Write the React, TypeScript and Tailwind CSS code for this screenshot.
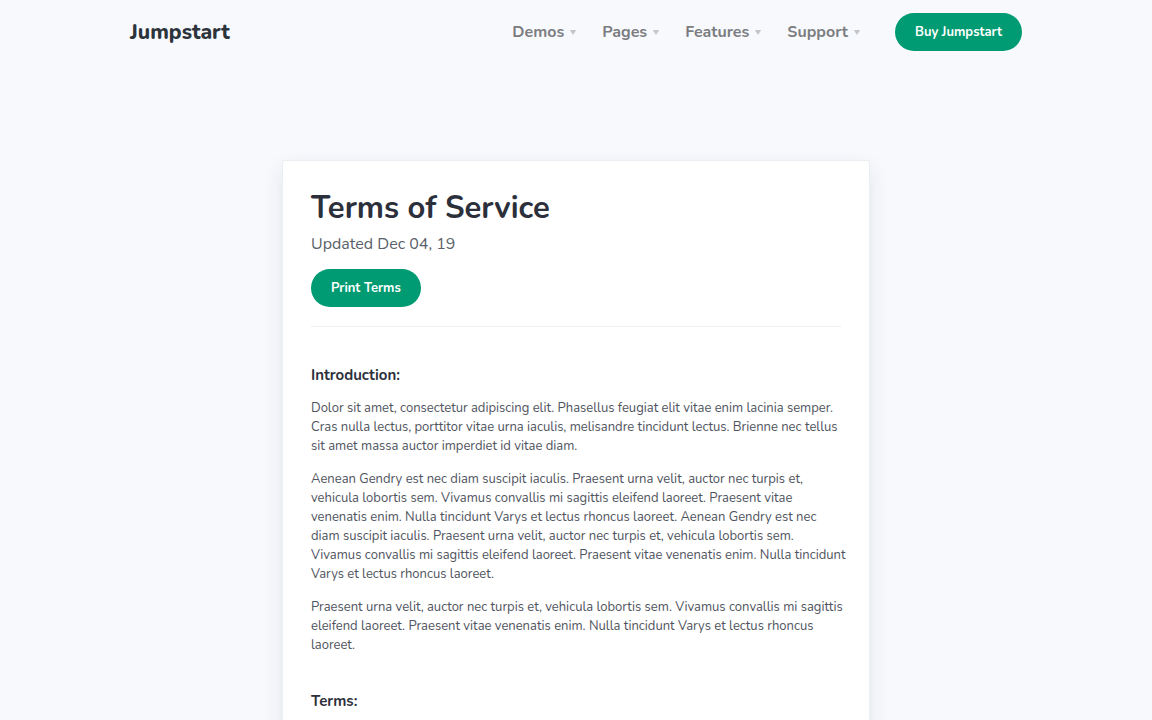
const navItems = ["Demos", "Pages", "Features", "Support"];

const introduction = [
  "Dolor sit amet, consectetur adipiscing elit. Phasellus feugiat elit vitae enim lacinia semper. Cras nulla lectus, porttitor vitae urna iaculis, melisandre tincidunt lectus. Brienne nec tellus sit amet massa auctor imperdiet id vitae diam.",
  "Aenean Gendry est nec diam suscipit iaculis. Praesent urna velit, auctor nec turpis et, vehicula lobortis sem. Vivamus convallis mi sagittis eleifend laoreet. Praesent vitae venenatis enim. Nulla tincidunt Varys et lectus rhoncus laoreet. Aenean Gendry est nec diam suscipit iaculis. Praesent urna velit, auctor nec turpis et, vehicula lobortis sem. Vivamus convallis mi sagittis eleifend laoreet. Praesent vitae venenatis enim. Nulla tincidunt Varys et lectus rhoncus laoreet.",
  "Praesent urna velit, auctor nec turpis et, vehicula lobortis sem. Vivamus convallis mi sagittis eleifend laoreet. Praesent vitae venenatis enim. Nulla tincidunt Varys et lectus rhoncus laoreet.",
];

function Caret() {
  return (
    <svg className="h-[5px] w-[6px] fill-[#c3c5c8]" viewBox="0 0 6 5" aria-hidden="true">
      <path d="M.4 0h5.2q.5 0 .3.5L3.3 4.6q-.3.5-.6 0L.1.5Q-.1 0 .4 0z" />
    </svg>
  );
}

function Header() {
  return (
    <header className="px-8 py-[13px]">
      <div className="mx-auto flex max-w-[892px] items-center justify-between">
        <a href="#" className="text-[21px] leading-[30px] font-extrabold text-[#2c343b]">
          Jumpstart
        </a>
        <div className="flex items-center gap-[35px]">
          <nav className="flex items-center gap-[26px]">
            {navItems.map((item) => (
              <button
                key={item}
                type="button"
                className="flex items-center gap-[6px] text-base leading-6 font-bold text-[#7b7d81]"
              >
                {item}
                <Caret />
              </button>
            ))}
          </nav>
          <a
            href="#"
            className="rounded-full bg-[#009b72] px-5 text-[13px] leading-[38px] font-bold text-white"
          >
            Buy Jumpstart
          </a>
        </div>
      </div>
    </header>
  );
}

export default function App() {
  return (
    <div className="min-h-screen overflow-hidden bg-[#f8f9fd] font-['Nunito','Lato',sans-serif]">
      <Header />
      <main className="mx-auto mt-24 max-w-[588px] rounded-[3px] border border-[#ebeef2] bg-white px-7 pt-[29px] pb-24 shadow-[0_8px_20px_rgba(31,45,61,0.1)]">
        <h1 className="text-[31px] leading-9 font-bold text-[#2c303b]">Terms of Service</h1>
        <p className="mt-[3px] text-base leading-[30px] text-[#5a5f69]">Updated Dec 04, 19</p>
        <button
          type="button"
          className="mt-[10px] block rounded-full bg-[#009b72] px-5 text-[13px] leading-[38px] font-bold text-white"
        >
          Print Terms
        </button>
        <hr className="mt-[19px] border-[#edeff4]" />
        <section className="mt-[38px]">
          <h2 className="text-[15px] leading-5 font-bold text-[#2c303b]">Introduction:</h2>
          <div className="-mr-1.5 mt-[14px] flex flex-col gap-[14px] text-[13px] leading-[19px] text-[#4f545e]">
            {introduction.map((text) => (
              <p key={text}>{text}</p>
            ))}
          </div>
        </section>
        <section className="mt-9">
          <h2 className="text-[15px] leading-5 font-bold text-[#2c303b]">Terms:</h2>
        </section>
      </main>
    </div>
  );
}
